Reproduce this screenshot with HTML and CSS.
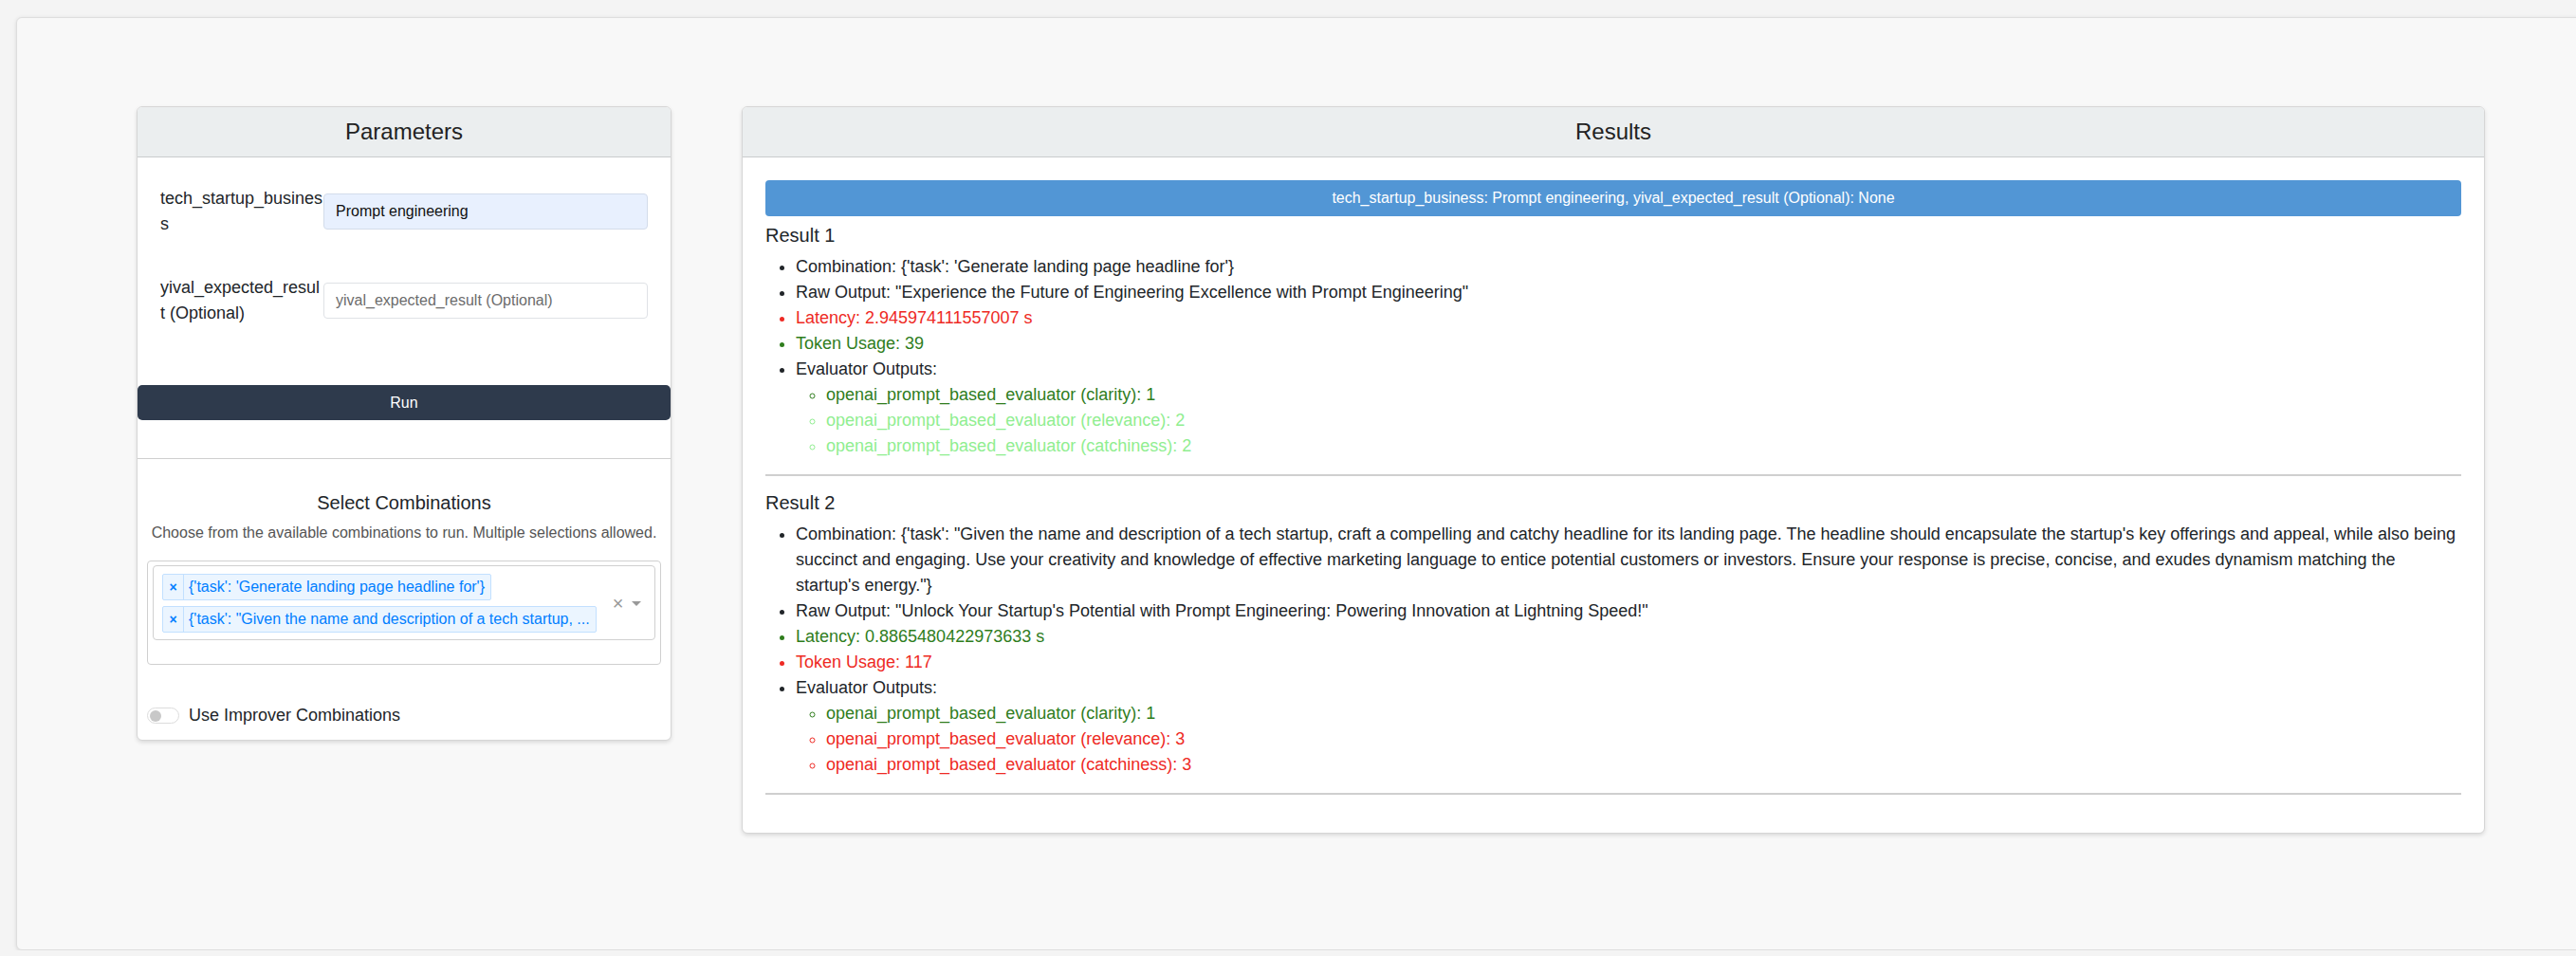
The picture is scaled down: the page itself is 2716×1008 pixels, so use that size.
FILE: index.html
```html
<!DOCTYPE html>
<html lang="en">
<head>
<meta charset="utf-8">
<title>YiVal</title>
<link rel="stylesheet" href="styles.css">
</head>
<body>
<div class="page">
  <div class="layout">
    <section class="card params">
      <div class="card-header">Parameters</div>
      <div class="param-fields">
        <div class="field-row">
          <label class="field-label">tech_startup_business</label>
          <div class="field-input"><input class="text-input filled" type="text" value="Prompt engineering"></div>
        </div>
        <div class="field-row">
          <label class="field-label">yival_expected_result (Optional)</label>
          <div class="field-input"><input class="text-input" type="text" placeholder="yival_expected_result (Optional)"></div>
        </div>
      </div>
      <button class="run-btn" type="button">Run</button>
      <div class="combo-section">
        <h3 class="combo-title">Select Combinations</h3>
        <p class="combo-help">Choose from the available combinations to run. Multiple selections allowed.</p>
        <div class="select-wrap">
          <div class="select-control">
            <div class="tags">
              <div class="tag"><span class="tag-x">×</span><span class="tag-label">{'task': 'Generate landing page headline for'}</span></div>
              <div class="tag"><span class="tag-x">×</span><span class="tag-label">{'task': "Given the name and description of a tech startup, ...</span></div>
            </div>
            <span class="clear-x">×</span>
            <span class="arrow-zone"><span class="arrow"></span></span>
          </div>
        </div>
        <div class="toggle-row">
          <span class="toggle"><span class="knob"></span></span>
          <span class="toggle-label">Use Improver Combinations</span>
        </div>
      </div>
    </section>

    <section class="card results">
      <div class="card-header">Results</div>
      <div class="results-body">
        <div class="banner">tech_startup_business: Prompt engineering, yival_expected_result (Optional): None</div>

        <h4 class="result-title">Result 1</h4>
        <ul class="result-list">
          <li>Combination: {'task': 'Generate landing page headline for'}</li>
          <li>Raw Output: "Experience the Future of Engineering Excellence with Prompt Engineering"</li>
          <li class="bad">Latency: 2.945974111557007 s</li>
          <li class="good">Token Usage: 39</li>
          <li>Evaluator Outputs:
            <ul class="sub-list">
              <li class="good">openai_prompt_based_evaluator (clarity): 1</li>
              <li class="light">openai_prompt_based_evaluator (relevance): 2</li>
              <li class="light">openai_prompt_based_evaluator (catchiness): 2</li>
            </ul>
          </li>
        </ul>
        <hr class="divider">

        <h4 class="result-title">Result 2</h4>
        <ul class="result-list">
          <li>Combination: {'task': "Given the name and description of a tech startup, craft a compelling and catchy headline for its landing page. The headline should encapsulate the startup's key offerings and appeal, while also being succinct and engaging. Use your creativity and knowledge of effective marketing language to entice potential customers or investors. Ensure your response is precise, concise, and exudes dynamism matching the startup's energy."}</li>
          <li>Raw Output: "Unlock Your Startup's Potential with Prompt Engineering: Powering Innovation at Lightning Speed!"</li>
          <li class="good">Latency: 0.8865480422973633 s</li>
          <li class="bad">Token Usage: 117</li>
          <li>Evaluator Outputs:
            <ul class="sub-list">
              <li class="good">openai_prompt_based_evaluator (clarity): 1</li>
              <li class="bad">openai_prompt_based_evaluator (relevance): 3</li>
              <li class="bad">openai_prompt_based_evaluator (catchiness): 3</li>
            </ul>
          </li>
        </ul>
        <hr class="divider">
      </div>
    </section>
  </div>
</div>
</body>
</html>
```

FILE: styles.css
```css
html, body {
  margin: 0;
  padding: 0;
  overflow: hidden;
  background: #f4f4f4;
  font-family: "Liberation Sans", Arial, Helvetica, sans-serif;
  color: #212529;
}

* { box-sizing: border-box; }

.page {
  margin: 18px 0 0 17px;
  width: 2760px;
  height: 984px;
  background: #f8f8f8;
  border: 1px solid #dedede;
  border-radius: 6px;
  box-shadow: 0 1px 4px rgba(0, 0, 0, 0.12);
  padding: 93px 0 0 126px;
}

.layout {
  display: flex;
  align-items: flex-start;
  gap: 74px;
}

.card {
  background: #ffffff;
  border: 1px solid #d6d6d6;
  border-radius: 6px;
  box-shadow: 0 2px 4px rgba(0, 0, 0, 0.12);
  overflow: hidden;
}

.params { width: 564px; }
.results { width: 1838px; }

.card-header {
  height: 53px;
  background: #ebeeef;
  border-bottom: 1px solid #c9cccd;
  font-size: 24px;
  line-height: 52px;
  text-align: center;
  color: #222;
}

/* parameters */
.param-fields {
  padding: 30px 24px 0;
  display: flex;
  flex-direction: column;
  gap: 40px;
}

.field-row {
  display: flex;
  align-items: center;
}

.field-label {
  flex: 0 0 172px;
  width: 172px;
  font-size: 18px;
  line-height: 27px;
  word-break: break-all;
  color: #212529;
}

.field-input { flex: 1; }

.text-input {
  display: block;
  width: 100%;
  height: 38px;
  padding: 0 12px;
  font-family: "Liberation Sans", Arial, Helvetica, sans-serif;
  font-size: 16px;
  color: #111;
  background: #fff;
  border: 1px solid #dfe2e6;
  border-radius: 4px;
  outline: none;
}

.text-input::placeholder { color: #6c6c6c; }

.text-input.filled {
  background: #e8f0fe;
  border-color: #d3dcea;
}

.run-btn {
  display: block;
  width: 100%;
  height: 37px;
  margin-top: 62px;
  border: none;
  border-radius: 5px;
  background: #2e3a4c;
  color: #fff;
  font-family: "Liberation Sans", Arial, Helvetica, sans-serif;
  font-size: 16px;
}

.combo-section {
  margin-top: 40px;
  border-top: 1px solid #cfcfcf;
  padding: 34px 10px 12px;
}

.combo-title {
  margin: 0;
  font-size: 20px;
  line-height: 24px;
  font-weight: normal;
  text-align: center;
  color: #212529;
}

.combo-help {
  margin: 9px 0 0;
  font-size: 16px;
  line-height: 22px;
  text-align: center;
  color: #555;
}

.select-wrap {
  margin-top: 18px;
  height: 110px;
  border: 1px solid #d0d0d0;
  border-radius: 4px;
  padding: 4px 5px;
}

.select-control {
  display: flex;
  align-items: center;
  border: 1px solid #d0d0d0;
  border-radius: 4px;
  padding: 8px 8px 7px 9px;
}

.tags {
  flex: 1;
  display: flex;
  flex-direction: column;
  align-items: flex-start;
  gap: 6px;
}

.tag {
  display: inline-flex;
  height: 28px;
  background: #ebf5ff;
  border: 1px solid #c2e0ff;
  border-radius: 2px;
  color: #007eff;
  font-size: 16px;
  line-height: 26px;
}

.tag-x {
  width: 22px;
  text-align: center;
  border-right: 1px solid #c2e0ff;
  font-size: 14px;
  font-weight: bold;
}

.tag-label {
  padding: 0 6px 0 5px;
  white-space: nowrap;
}

.clear-x {
  width: 17px;
  text-align: center;
  color: #999;
  font-size: 20px;
  line-height: 20px;
}

.arrow-zone {
  width: 22px;
  display: flex;
  justify-content: center;
  align-items: center;
}

.arrow {
  width: 0;
  height: 0;
  border-left: 5px solid transparent;
  border-right: 5px solid transparent;
  border-top: 5px solid #999;
}

.toggle-row {
  margin-top: 40px;
  display: flex;
  align-items: center;
  gap: 10px;
  font-size: 18px;
  line-height: 27px;
}

.toggle {
  width: 34px;
  height: 17px;
  border: 1px solid #dcdcdc;
  border-radius: 9px;
  background: #fff;
  display: flex;
  align-items: center;
  padding-left: 2px;
}

.knob {
  width: 12px;
  height: 12px;
  border-radius: 50%;
  background: #c8c8c8;
}

/* results */
.results-body {
  padding: 24px 24px 24px;
}

.banner {
  height: 38px;
  line-height: 38px;
  background: #5296d5;
  color: #fff;
  border-radius: 4px;
  text-align: center;
  font-size: 16px;
}

.result-title {
  margin: 8px 0 0;
  font-size: 20px;
  line-height: 24px;
  font-weight: normal;
}

.result-list {
  margin: 8px 0 0;
  padding-left: 32px;
  font-size: 18px;
  line-height: 27px;
  list-style: disc;
}

.sub-list {
  margin: 0;
  padding-left: 32px;
  list-style: circle;
}

.result-list li.bad { color: #ee2a24; }
.result-list li.good { color: #2f7d1d; }
.result-list li.light { color: #90ee90; }

.divider {
  margin: 16px 0;
  border: none;
  border-top: 2px solid #cfcfcf;
  height: 0;
}
```
